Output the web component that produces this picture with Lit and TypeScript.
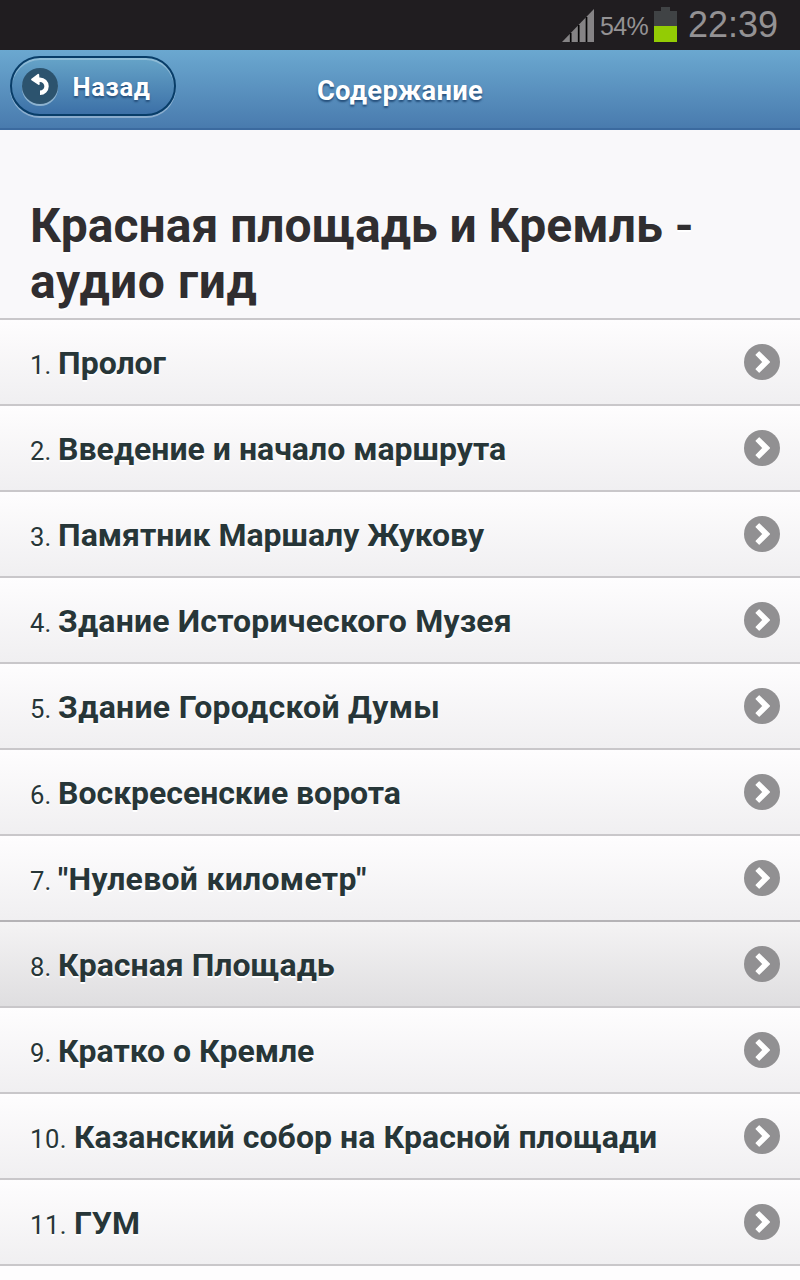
import { LitElement, html, css } from "lit";
import { customElement, property } from "lit/decorators.js";
import { classMap } from "lit/directives/class-map.js";
import { styleMap } from "lit/directives/style-map.js";

interface Chapter {
  label: string;
  tracking: number;
}

const CHAPTERS: Chapter[] = [
  { label: "Пролог", tracking: -0.03 },
  { label: "Введение и начало маршрута", tracking: 0 },
  { label: "Памятник Маршалу Жукову", tracking: -0.02 },
  { label: "Здание Исторического Музея", tracking: 0.16 },
  { label: "Здание Городской Думы", tracking: 0.29 },
  { label: "Воскресенские ворота", tracking: -0.04 },
  { label: "\"Нулевой километр\"", tracking: 0.27 },
  { label: "Красная Площадь", tracking: 0.02 },
  { label: "Кратко о Кремле", tracking: -0.03 },
  { label: "Казанский собор на Красной площади", tracking: 0.05 },
  { label: "ГУМ", tracking: 0.1 },
];

@customElement("status-bar")
class StatusBar extends LitElement {
  static styles = css`
    :host {
      display: flex;
      justify-content: flex-end;
      height: 50px;
      box-sizing: border-box;
      padding-right: 22px;
      background: #201d20;
      color: #949294;
      font-family: "Liberation Sans", Arial, sans-serif;
      white-space: nowrap;
    }
    svg { display: block; flex: none; }
    .percent { width: 50px; margin-left: 5px; font-size: 25px; line-height: 52px; letter-spacing: -0.6px; }
    .battery { margin-left: 4px; }
    .clock { margin-left: 11px; font-size: 36px; line-height: 50px; }
  `;
  render() {
    return html`
      <svg width="34" height="50" viewBox="0 0 34 50">
        <path d="M1 42 33 9V42Z" fill="#858385" />
        <path d="M9.7 33V42M17.7 25V42M25.5 17V42" stroke="#050405" stroke-width="1.7" />
      </svg>
      <span class="percent">54%</span>
      <svg class="battery" width="23" height="50" viewBox="0 0 23 50">
        <path d="M0 11H7V7H16V11H23V26H0Z" fill="#404345" />
        <path d="M0 26H23V42H0Z" fill="#93cc04" />
      </svg>
      <span class="clock">22:39</span>
    `;
  }
}

@customElement("page-header")
class PageHeader extends LitElement {
  static styles = css`
    :host {
      display: grid;
      grid-template-columns: 176px 1fr 176px;
      height: 80px;
      box-sizing: border-box;
      border-bottom: 2px solid #3b6a9f;
      background: linear-gradient(#6ba8d0, #497bae);
      color: #fff;
      font-family: Roboto, sans-serif;
      font-weight: 700;
      text-shadow: 0 2px 2px #254f7b;
    }
    .back {
      display: flex;
      align-items: center;
      gap: 14.5px;
      width: 166px;
      height: 60px;
      margin: 6px 0 0 10px;
      padding: 0 0 0 10px;
      box-sizing: border-box;
      border: 2px solid #083d68;
      border-radius: 30px;
      background: linear-gradient(#66a4c8, #3c70a7);
      box-shadow: 0 2px 0 rgba(255, 255, 255, 0.34), inset 0 2px 0 rgba(255, 255, 255, 0.28);
      color: inherit;
      font: inherit;
      font-size: 25.6px;
      line-height: 30px;
      letter-spacing: 0.65px;
      text-shadow: inherit;
    }
    .back span { padding-top: 2px; white-space: nowrap; }
    .back svg { display: block; flex: none; overflow: visible; }
    .title { margin: 0; font-size: 27.4px; line-height: 82px; letter-spacing: 0.25px; text-align: center; }
  `;
  render() {
    return html`
      <button class="back">
        <svg width="36" height="36" viewBox="0 0 36 36">
          <circle cx="18" cy="20" r="18" fill="#8db2cf" />
          <circle cx="18" cy="18" r="18" fill="#2c536e" />
          <path d="M13 11.7H18A6.5 6.5 0 0 1 18 24.8" fill="none" stroke="#fff" stroke-width="4.4" />
          <path d="M10 11.4 16.3 6.7 16.8 16Z" fill="#fff" stroke="#fff" stroke-width="1.8" stroke-linejoin="round" />
        </svg>
        <span>Назад</span>
      </button>
      <h1 class="title">Содержание</h1>
    `;
  }
}

@customElement("chapter-row")
class ChapterRow extends LitElement {
  @property({ type: Number }) number = 0;
  @property() label = "";
  @property({ type: Number }) tracking = 0;
  @property({ type: Boolean }) active = false;
  @property({ type: Boolean }) beforeActive = false;

  static styles = css`
    .row {
      display: flex;
      align-items: center;
      justify-content: space-between;
      height: 86px;
      box-sizing: border-box;
      padding: 0 20px 0 30px;
      border-bottom: 2px solid #c9c7ca;
      background: linear-gradient(#fefdfe, #f0eff1);
      color: #273638;
      font-family: Roboto, sans-serif;
      text-shadow: 0 2px 0 #fff;
      white-space: nowrap;
    }
    .active { background: linear-gradient(#f4f3f4, #dfdee0); }
    .before-active { border-bottom-color: #b5b3b6; }
    .text { padding-top: 7px; line-height: 40px; }
    .number { font-size: 25.6px; letter-spacing: 0.2px; }
    .wide { letter-spacing: 0.5px; }
    .label { font-size: 32px; font-weight: 700; }
    svg { display: block; flex: none; }
  `;
  render() {
    return html`
      <div class=${classMap({ row: true, active: this.active, "before-active": this.beforeActive })}>
        <div class="text"><span class=${classMap({ number: true, wide: this.number > 9 })}>${this.number}. </span><span class="label" style=${styleMap({ letterSpacing: `${this.tracking}px` })}>${this.label}</span></div>
        <svg width="36" height="36" viewBox="0 0 36 36">
          <circle cx="18" cy="18" r="18" fill="#919092" />
          <path d="M15.2 7.8 25.4 18 15.2 28.2 12.1 25.1 19.1 18 12.1 10.9Z" fill="#fff" stroke="#fff" stroke-width="1.2" stroke-linejoin="round" />
        </svg>
      </div>
    `;
  }
}

@customElement("app-root")
class AppRoot extends LitElement {
  static styles = css`
    :host { display: block; height: 1280px; overflow: hidden; background: #f9f8fa; }
    .heading {
      height: 190px;
      box-sizing: border-box;
      margin: 0;
      padding: 68px 30px 0;
      border-bottom: 2px solid #c9c7ca;
      color: #302e30;
      font: 700 48px/56px Roboto, sans-serif;
      text-shadow: 0 2px 0 #fff;
    }
    .second { letter-spacing: 0.6px; }
    .remainder { height: 14px; background: #fefdfe; }
  `;
  render() {
    const selected = 7;
    return html`
      <status-bar></status-bar>
      <page-header></page-header>
      <h2 class="heading">Красная площадь и Кремль -<br /><span class="second">аудио гид</span></h2>
      ${CHAPTERS.map(
        (chapter, i) => html`<chapter-row
          .number=${i + 1}
          .label=${chapter.label}
          .tracking=${chapter.tracking}
          .active=${i === selected}
          .beforeActive=${i === selected - 1}
        ></chapter-row>`
      )}
      <div class="remainder"></div>
    `;
  }
}
